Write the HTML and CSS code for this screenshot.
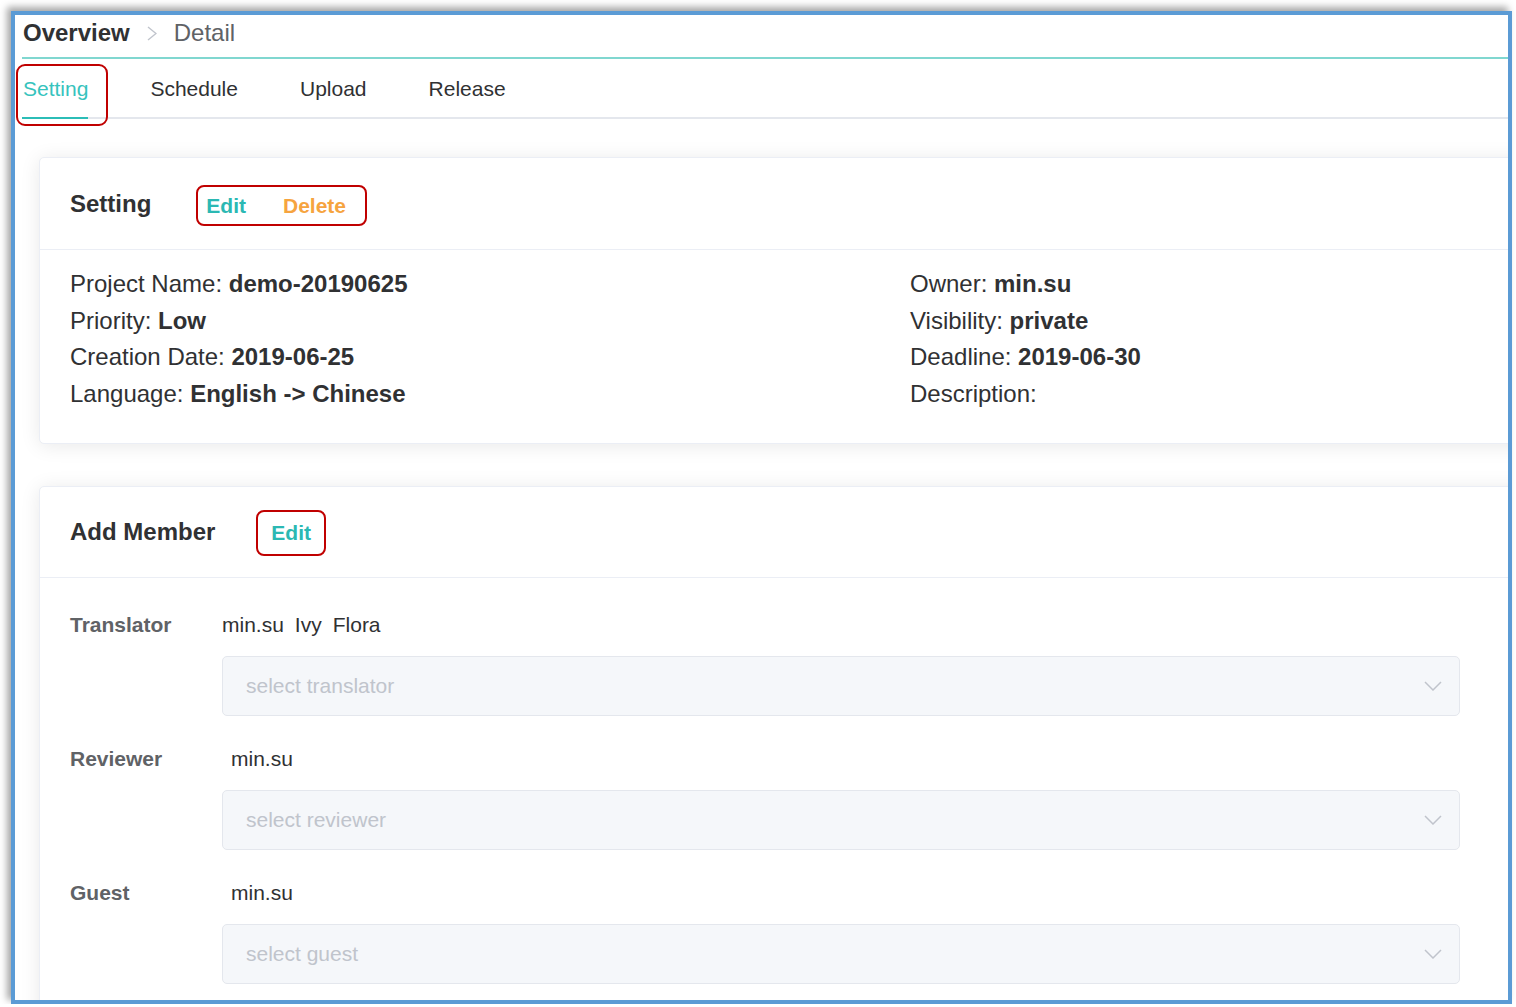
FILE: index.html
```html
<!DOCTYPE html>
<html lang="en">
<head>
<meta charset="utf-8">
<title>Project Detail</title>
<link rel="stylesheet" href="styles.css">
</head>
<body>
<div class="frame">
  <div class="breadcrumb">
    <span class="crumb-main">Overview</span>
    <svg class="crumb-sep" width="10" height="15" viewBox="0 0 10 15"><polyline points="1,1 9,7.5 1,14" fill="none" stroke="#c0c4cc" stroke-width="1.4"/></svg>
    <span class="crumb-sub">Detail</span>
  </div>
  <div class="tabs">
    <div class="tab active">Setting<span class="mark mark-tab"></span></div>
    <div class="tab">Schedule</div>
    <div class="tab">Upload</div>
    <div class="tab">Release</div>
  </div>
  <div class="content">
    <div class="card">
      <div class="card-header">
        <span class="card-title">Setting</span>
        <div class="actions actions-setting">
          <span class="btn btn-edit">Edit</span>
          <span class="btn btn-delete">Delete</span>
        </div>
      </div>
      <div class="info">
        <div>Project Name: <b>demo-20190625</b></div>
        <div>Owner: <b>min.su</b></div>
        <div>Priority: <b>Low</b></div>
        <div>Visibility: <b>private</b></div>
        <div>Creation Date: <b>2019-06-25</b></div>
        <div>Deadline: <b>2019-06-30</b></div>
        <div>Language: <b>English -&gt; Chinese</b></div>
        <div>Description:</div>
      </div>
    </div>
    <div class="card card-member">
      <div class="card-header card-header-member">
        <span class="card-title">Add Member</span>
        <div class="actions actions-member">
          <span class="btn btn-edit">Edit</span>
        </div>
      </div>
      <div class="members">
        <div class="form-item">
          <div class="form-label">Translator</div>
          <div class="form-content">
            <div class="values"><span class="name">min.su</span><span class="name">Ivy</span><span class="name">Flora</span></div>
            <div class="select"><span class="placeholder">select translator</span><svg width="18" height="10" viewBox="0 0 18 10"><polyline points="1,1 9,9 17,1" fill="none" stroke="#c0c4cc" stroke-width="1.5"/></svg></div>
          </div>
        </div>
        <div class="form-item">
          <div class="form-label">Reviewer</div>
          <div class="form-content">
            <div class="values values-indent"><span class="name">min.su</span></div>
            <div class="select"><span class="placeholder">select reviewer</span><svg width="18" height="10" viewBox="0 0 18 10"><polyline points="1,1 9,9 17,1" fill="none" stroke="#c0c4cc" stroke-width="1.5"/></svg></div>
          </div>
        </div>
        <div class="form-item">
          <div class="form-label">Guest</div>
          <div class="form-content">
            <div class="values values-indent"><span class="name">min.su</span></div>
            <div class="select"><span class="placeholder">select guest</span><svg width="18" height="10" viewBox="0 0 18 10"><polyline points="1,1 9,9 17,1" fill="none" stroke="#c0c4cc" stroke-width="1.5"/></svg></div>
          </div>
        </div>
      </div>
    </div>
  </div>
</div>
</body>
</html>
```

FILE: styles.css
```css
* { box-sizing: border-box; }

html, body {
  margin: 0;
  padding: 0;
  background: #ffffff;
}

body {
  font-family: "Liberation Sans", Arial, sans-serif;
  color: #303133;
}

.frame {
  margin: 11px 0 0 11px;
  width: 1501px;
  height: 993px;
  border: 4px solid #5b9bd5;
  background: #ffffff;
  overflow: hidden;
  box-shadow: -4px -4px 7px rgba(0, 0, 0, 0.35);
}

.breadcrumb {
  display: flex;
  align-items: center;
  height: 44px;
  margin-left: 7px;
  padding: 0 0 6px 1px;
  border-bottom: 2px solid #80d7d0;
}

.crumb-main {
  font-size: 24px;
  font-weight: bold;
  color: #303133;
}

.crumb-sep {
  margin: 0 17px;
}

.crumb-sub {
  font-size: 24px;
  color: #606266;
}

.tabs {
  display: flex;
  gap: 62px;
  height: 60px;
  margin-left: 7px;
  padding-left: 1px;
  border-bottom: 2px solid #e4e7ed;
}

.tab {
  position: relative;
  display: flex;
  align-items: center;
  height: 58px;
  padding-top: 2px;
  font-size: 21px;
  color: #303133;
}

.tab.active {
  color: #36c3bd;
}

.tab.active::after {
  content: "";
  position: absolute;
  left: -1px;
  right: 0;
  bottom: -2px;
  height: 2px;
  background: #2bbdb7;
}

.mark {
  position: absolute;
  border: 2px solid #c00000;
  border-radius: 9px;
}

.mark-tab {
  left: -7px;
  top: 5px;
  width: 92px;
  height: 62px;
}

.content {
  padding: 38px 0 0 24px;
}

.card {
  width: 1760px;
  background: #ffffff;
  border: 1px solid #ebeef5;
  border-radius: 5px;
  box-shadow: 0 2px 20px rgba(0, 0, 0, 0.09);
}

.card-member {
  margin-top: 42px;
}

.card-header {
  display: flex;
  align-items: center;
  height: 92px;
  padding: 0 30px;
  border-bottom: 1px solid #ebeef5;
}

.card-header-member {
  height: 91px;
}

.card-title {
  font-size: 24px;
  font-weight: bold;
  color: #303133;
}

.actions {
  display: flex;
  align-items: center;
  border: 2px solid #c00000;
  border-radius: 8px;
}

.actions-setting {
  margin-left: 45px;
  margin-top: 4px;
  height: 41px;
  padding: 0 19px 0 8px;
  gap: 37px;
}

.actions-member {
  margin-left: 41px;
  margin-top: 2px;
  height: 46px;
  padding: 0 13px;
}

.btn {
  font-size: 21px;
  font-weight: bold;
}

.btn-edit {
  color: #2bb8b3;
}

.btn-delete {
  color: #f6a43f;
}

.info {
  display: grid;
  grid-template-columns: 840px 1fr;
  padding: 16px 30px 30px;
  font-size: 24px;
  line-height: 36.67px;
  color: #303133;
}

.info b {
  color: #303133;
}

.members {
  padding: 27px 30px 40px;
}

.form-item {
  display: grid;
  grid-template-columns: 152px 1fr;
  margin-bottom: 23px;
}

.form-label {
  font-size: 21px;
  font-weight: bold;
  line-height: 40px;
  color: #606266;
}

.values {
  font-size: 21px;
  line-height: 40px;
  color: #303133;
}

.values-indent {
  padding-left: 9px;
}

.name {
  margin-right: 11px;
}

.select {
  display: flex;
  align-items: center;
  justify-content: space-between;
  width: 1238px;
  height: 60px;
  margin-top: 11px;
  padding: 0 17px 0 23px;
  background: #f5f7fa;
  border: 1px solid #e4e7ed;
  border-radius: 5px;
}

.placeholder {
  font-size: 21px;
  color: #c0c4cc;
}
```
